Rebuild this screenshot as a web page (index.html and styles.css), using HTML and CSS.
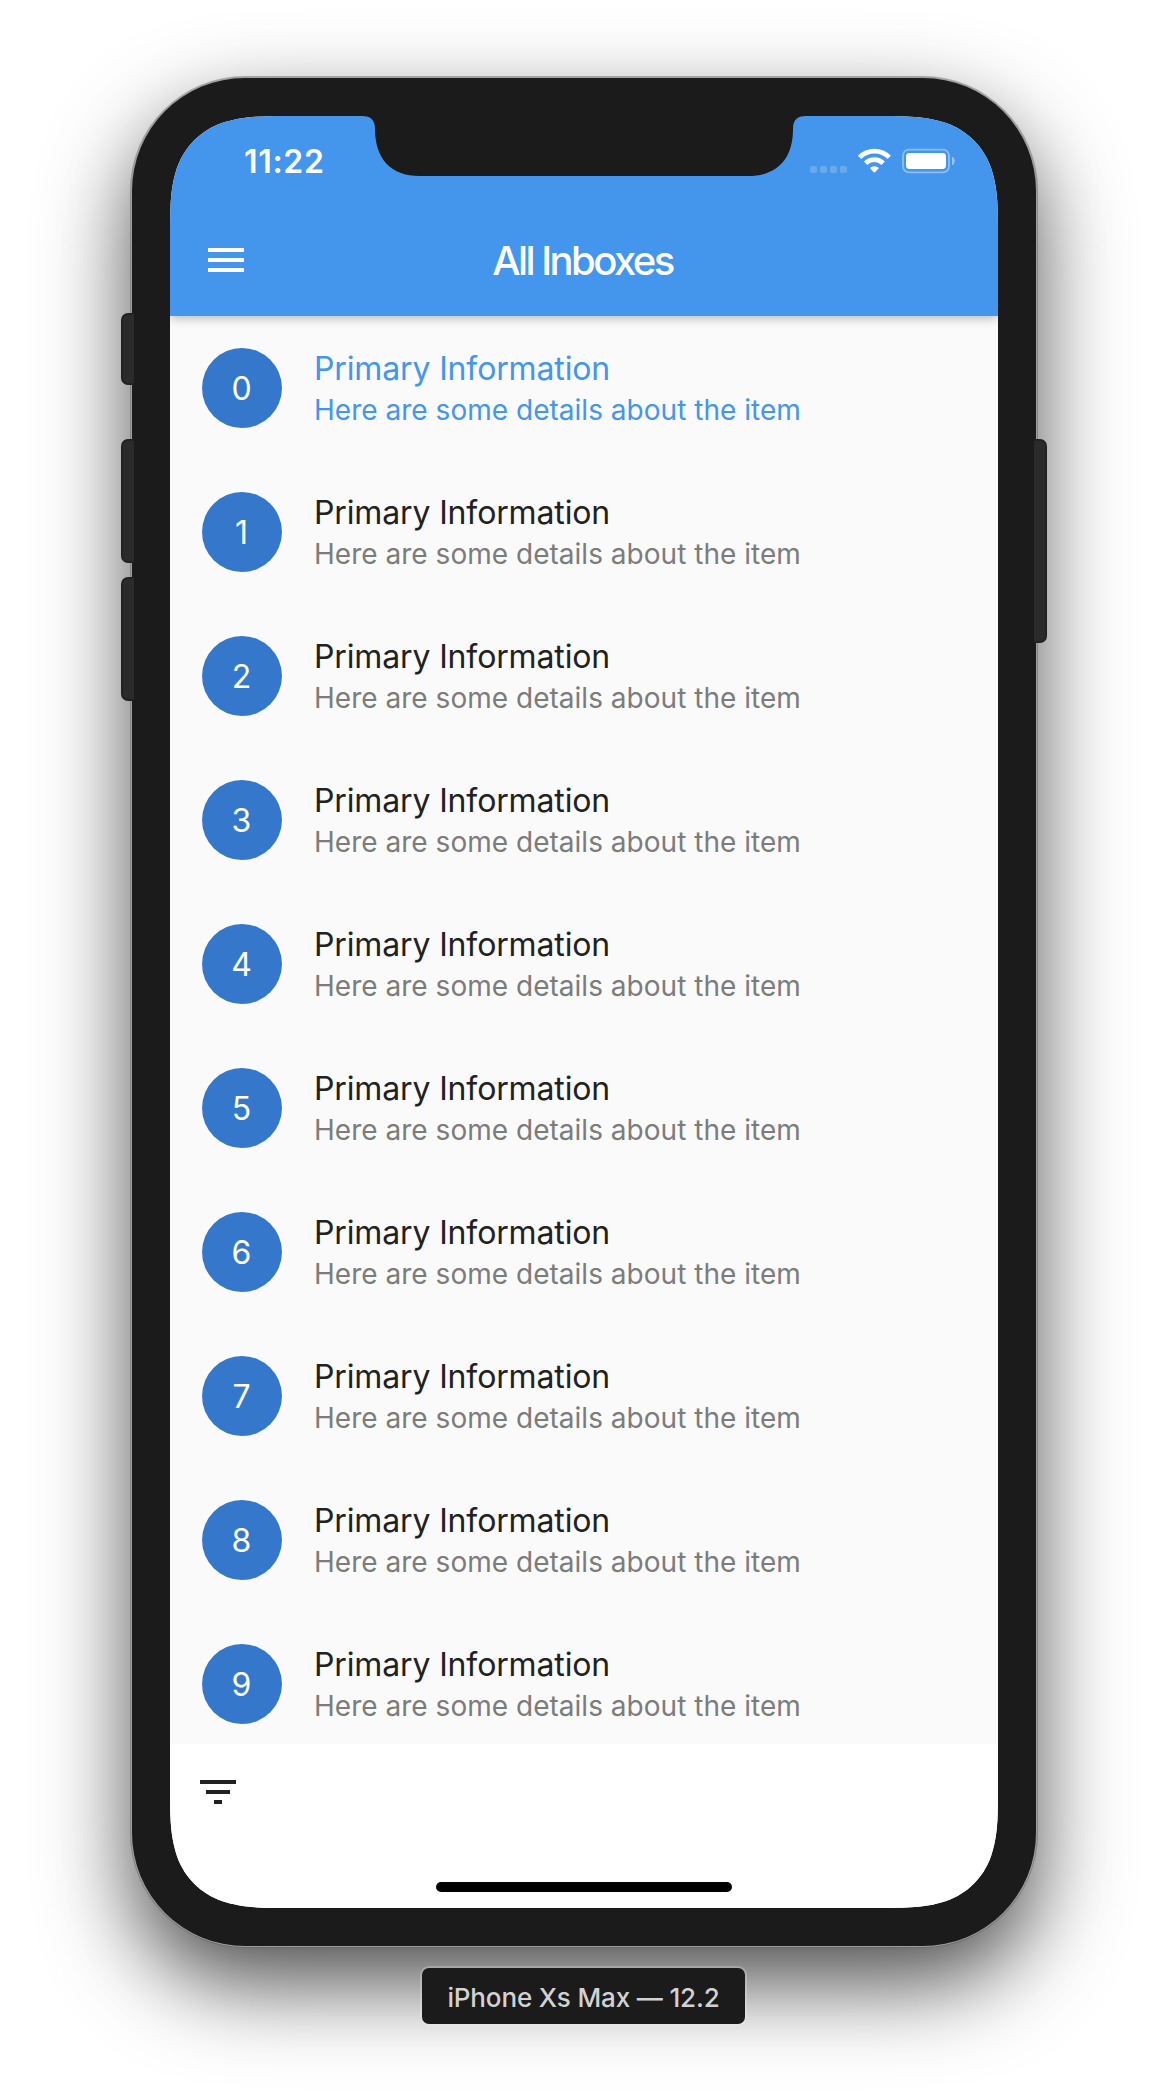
FILE: index.html
```html
<!DOCTYPE html>
<html lang="en">
<head>
<meta charset="utf-8">
<title>All Inboxes</title>
<link rel="stylesheet" href="styles.css">
</head>
<body>
<main class="stage">
  <div class="device">
    <span class="key key-left key-mute"></span>
    <span class="key key-left key-up"></span>
    <span class="key key-left key-down"></span>
    <span class="key key-right"></span>
    <div class="screen">
      <header class="top">
        <svg class="notch" width="444" height="60" viewBox="0 0 444 60"><path d="M0 0C9 0 13 4 13 13C13 42 28 60 58 60H386C416 60 431 42 431 13C431 4 435 0 444 0Z" fill="#1b1b1b"/></svg>
        <div class="status">
          <span class="clock">11:22</span>
          <svg class="indicators" width="148" height="28" viewBox="0 0 148 28" fill="#fff">
            <g opacity=".2"><rect x="2" y="18" width="7" height="7" rx="2"/><rect x="12" y="18" width="7" height="7" rx="2"/><rect x="22" y="18" width="7" height="7" rx="2"/><rect x="32" y="18" width="7" height="7" rx="2"/></g>
            <g fill="none" stroke="#fff" stroke-width="4.8"><path d="M51.6 9.4A20.6 20.6 0 0 1 81.2 9.4"/><path d="M57.6 15.2A12.4 12.4 0 0 1 75.2 15.2"/></g>
            <path d="M61.8 20.1A6.6 6.6 0 0 1 71 20.1L67.3 24Q66.4 24.9 65.5 24Z"/>
            <rect x="95" y="1.7" width="46" height="22.6" rx="6" fill="none" stroke="#fff" stroke-width="1.8" opacity=".4"/>
            <rect x="98" y="5" width="40" height="16" rx="3.4"/>
            <path d="M144 8.6Q146.8 10 146.8 13Q146.8 16 144 17.4Z" opacity=".45"/>
          </svg>
        </div>
        <div class="appbar">
          <svg class="menu" width="48" height="48" viewBox="0 0 24 24" fill="#fff"><path d="M3 18h18v-2H3v2zm0-5h18v-2H3v2zm0-7v2h18V6H3z"/></svg>
          <h1 class="title">All Inboxes</h1>
          <span></span>
        </div>
      </header>
      <ul class="list">
        <li class="row selected"><span class="avatar">0</span><div><p class="primary">Primary Information</p><p class="detail">Here are some details about the item</p></div></li>
        <li class="row"><span class="avatar">1</span><div><p class="primary">Primary Information</p><p class="detail">Here are some details about the item</p></div></li>
        <li class="row"><span class="avatar">2</span><div><p class="primary">Primary Information</p><p class="detail">Here are some details about the item</p></div></li>
        <li class="row"><span class="avatar">3</span><div><p class="primary">Primary Information</p><p class="detail">Here are some details about the item</p></div></li>
        <li class="row"><span class="avatar">4</span><div><p class="primary">Primary Information</p><p class="detail">Here are some details about the item</p></div></li>
        <li class="row"><span class="avatar">5</span><div><p class="primary">Primary Information</p><p class="detail">Here are some details about the item</p></div></li>
        <li class="row"><span class="avatar">6</span><div><p class="primary">Primary Information</p><p class="detail">Here are some details about the item</p></div></li>
        <li class="row"><span class="avatar">7</span><div><p class="primary">Primary Information</p><p class="detail">Here are some details about the item</p></div></li>
        <li class="row"><span class="avatar">8</span><div><p class="primary">Primary Information</p><p class="detail">Here are some details about the item</p></div></li>
        <li class="row"><span class="avatar">9</span><div><p class="primary">Primary Information</p><p class="detail">Here are some details about the item</p></div></li>
      </ul>
      <footer class="bottom">
        <svg class="filter" width="48" height="48" viewBox="0 0 24 24" fill="#212121"><path d="M10 18h4v-2h-4v2zM3 6v2h18V6H3zm3 7h12v-2H6v2z"/></svg>
        <span class="home"></span>
      </footer>
    </div>
  </div>
  <div class="caption">iPhone Xs Max — 12.2</div>
</main>
</body>
</html>
```
FILE: styles.css
```css
* { box-sizing: border-box; margin: 0; padding: 0; }

body {
  background: #fff;
  font-family: Inter, "Liberation Sans", sans-serif;
  overflow: hidden;
}

.stage {
  display: flex;
  flex-direction: column;
  align-items: center;
  gap: 22px;
  height: 2096px;
  padding-top: 78px;
}

.device {
  position: relative;
  flex: none;
  width: 904px;
  height: 1868px;
  padding: 38px;
  border-radius: 113px;
  background: #1b1b1b;
  box-shadow:
    0 0 0 1px #a0a0a0,
    0 0 0 2px rgba(90, 90, 90, .45),
    0 37px 88px rgba(0, 0, 0, .7);
}

.key {
  position: absolute;
  width: 13px;
  background: #2b2b2b;
  border: 2px solid #222;
}
.key-left { left: -11px; border-right: 0; border-radius: 7px 0 0 7px; }
.key-right { right: -11px; top: 361px; height: 204px; border-left: 0; border-radius: 0 7px 7px 0; }
.key-mute { top: 235px; height: 72px; }
.key-up { top: 361px; height: 124px; }
.key-down { top: 499px; height: 124px; }

.screen {
  display: flex;
  flex-direction: column;
  width: 828px;
  height: 1792px;
  background: #fafafa;
  clip-path: path("M115 0H713C742 0 758 1 776.2 7C797.4 14.5 813.5 30.6 821 51.8C827 70 828 86 828 115V1677C828 1706 827 1722 821 1740.2C813.5 1761.4 797.4 1777.5 776.2 1785C758 1791 742 1792 713 1792H115C86 1792 70 1791 51.8 1785C30.6 1777.5 14.5 1761.4 7 1740.2C1 1722 0 1706 0 1677V115C0 86 1 70 7 51.8C14.5 30.6 30.6 14.5 51.8 7C70 1 86 0 115 0Z");
}

.top {
  position: relative;
  z-index: 1;
  flex: none;
  height: 200px;
  background: #4495ec;
  color: #fff;
  box-shadow: 0 2px 10px rgba(0, 0, 0, .28);
}

.notch { position: absolute; top: 0; left: 192px; }

.status {
  display: flex;
  justify-content: space-between;
  align-items: center;
  height: 88px;
  padding: 4px 42px 0 74px;
}

.clock { padding-bottom: 2px; font-size: 32px; font-weight: 560; letter-spacing: .7px; }

.appbar {
  display: grid;
  grid-template-columns: 64px 1fr 64px;
  align-items: center;
  height: 112px;
  padding: 0 35px 0 32px;
}
.title { font-size: 40px; font-weight: 500; letter-spacing: -2.55px; text-align: center; }

.list { flex: 1; list-style: none; overflow: hidden; }

.row {
  display: flex;
  align-items: center;
  gap: 32px;
  height: 144px;
  padding: 0 32px;
}

.avatar {
  display: flex;
  align-items: center;
  justify-content: center;
  width: 80px;
  height: 80px;
  padding-right: 1px;
  border-radius: 50%;
  background: #3477cb;
  color: #fff;
  font-size: 32px;
}

.primary { font-size: 32px; line-height: 42px; letter-spacing: -.14px; color: #212121; }
.detail { padding-top: 2px; font-size: 28px; line-height: 36px; letter-spacing: .02px; color: #7c7c7c; }
.selected .primary,
.selected .detail { color: #4495ec; }

.bottom {
  display: flex;
  flex-direction: column;
  justify-content: space-between;
  flex: none;
  height: 164px;
  padding: 24px 24px 16px;
  background: #fff;
}
.home { align-self: center; width: 296px; height: 10px; border-radius: 5px; background: #000; }

.caption {
  position: relative;
  width: 323px;
  height: 56px;
  margin-right: 1px;
  border-radius: 7px;
  background: #1b1b1b;
  box-shadow: 0 0 0 2px rgba(255, 255, 255, .22);
  color: #d2d2d2;
  font-size: 26px;
  font-weight: 450;
  letter-spacing: -.15px;
  line-height: 60px;
  text-align: center;
  white-space: nowrap;
}
```
